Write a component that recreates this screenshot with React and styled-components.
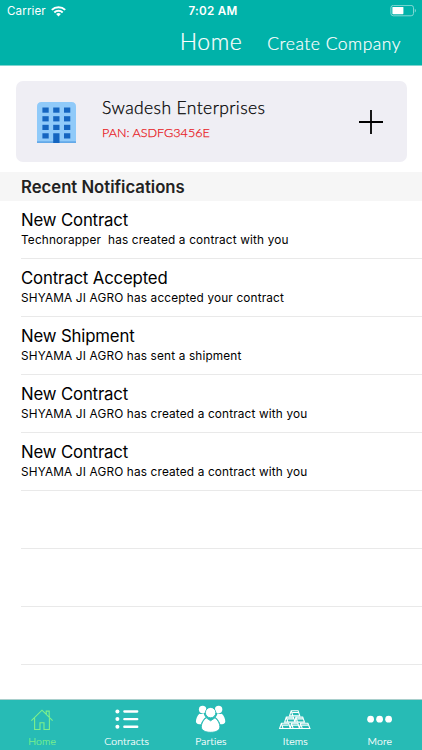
import React from "react";
import styled, { createGlobalStyle } from "styled-components";

const GlobalStyle = createGlobalStyle`
  * {
    box-sizing: border-box;
  }

  body {
    margin: 0;
    background: #fff;
  }
`;

const system = `Inter, "Liberation Sans", sans-serif`;
const rounded = `Lato, "Open Sans", sans-serif`;

const Screen = styled.div`
  width: 422px;
  height: 750px;
  display: flex;
  flex-direction: column;
  overflow: hidden;
  background: #fff;
  font-family: ${system};
`;

// Header
const Header = styled.header`
  height: 66px;
  flex-shrink: 0;
  background: #00b2a9;
  border-bottom: 1px solid #7fd4cf;
  color: #fff;
`;

const StatusBar = styled.div`
  height: 22px;
  display: grid;
  grid-template-columns: 1fr auto 1fr;
  align-items: center;
  padding: 0 5px 0 7px;
  font-size: 11.6px;
  line-height: 22px;
`;

const Carrier = styled.div`
  display: flex;
  align-items: center;
  gap: 5px;
  letter-spacing: 0.12px;
`;

const Clock = styled.div`
  margin-left: 2px;
  font-weight: 600;
  font-size: 11.7px;
  letter-spacing: 0.25px;
`;

const BatteryIcon = styled.svg`
  justify-self: end;
`;

const NavBar = styled.div`
  height: 43px;
  display: grid;
  grid-template-columns: 1fr auto 1fr;
  align-items: baseline;
  padding: 0 21px;
  font-family: ${rounded};
  font-weight: 300;
  line-height: 40px;
  -webkit-text-stroke: 0.2px;
`;

const NavTitle = styled.h1`
  grid-column: 2;
  margin: 0;
  font-size: 23px;
  font-weight: 300;
  line-height: 38px;
  letter-spacing: 0.5px;
`;

const NavAction = styled.button`
  justify-self: end;
  padding: 0;
  border: none;
  background: none;
  color: #fff;
  font-family: inherit;
  font-size: 17.5px;
  font-weight: 300;
  line-height: 38px;
  white-space: nowrap;
  letter-spacing: 0.5px;
`;

// Company card
const CompanyCard = styled.section`
  height: 81px;
  flex-shrink: 0;
  margin: 15px 15.5px 10px;
  padding: 0 24px 0 21px;
  display: flex;
  align-items: center;
  border-radius: 7px;
  background: #efeef4;
  font-family: ${rounded};
`;

const CompanyInfo = styled.div`
  flex: 1;
  margin: -2px 0 1px 26.5px;
`;

const CompanyName = styled.div`
  color: #000;
  font-size: 17.5px;
  font-weight: 300;
  line-height: 25px;
  letter-spacing: 0.4px;
  -webkit-text-stroke: 0.25px;
`;

const CompanyPan = styled.div`
  color: #e8181d;
  font-size: 12.6px;
  font-weight: 300;
  line-height: 26px;
  letter-spacing: 0;
  -webkit-text-stroke: 0.25px;
`;

// Notifications
const SectionTitle = styled.h2`
  height: 29px;
  flex-shrink: 0;
  margin: 0;
  padding-left: 21px;
  background: #f6f6f6;
  color: #222;
  font-size: 16.7px;
  font-weight: 600;
  line-height: 30px;
`;

const List = styled.ul`
  flex: 1;
  min-height: 0;
  overflow: hidden;
  margin: 0;
  padding: 0 0 0 21px;
  list-style: none;
`;

const Row = styled.li`
  height: 58px;
  padding-top: 7px;
  border-bottom: 1px solid #e9e9e9;
  color: #000;
`;

const RowTitle = styled.div`
  font-size: 16.8px;
  line-height: 24px;
  letter-spacing: -0.17px;
`;

const RowText = styled.div`
  font-size: 11.8px;
  line-height: 17px;
  white-space: pre;
  letter-spacing: 0.16px;
`;

// Tab bar
const TabBar = styled.nav`
  height: 51px;
  flex-shrink: 0;
  display: grid;
  grid-template-columns: repeat(5, 1fr);
  border-top: 1px solid #a9cfcc;
  background: #27bbb5;
`;

const Tab = styled.div`
  display: flex;
  flex-direction: column;
  align-items: center;
  color: ${({ $active }) => ($active ? "#7df08b" : "#fff")};
`;

const TabIcon = styled.svg`
  display: block;
  width: 36px;
  height: 34px;
`;

const TabLabel = styled.span`
  font-family: ${rounded};
  font-size: 10.4px;
  font-weight: 300;
  line-height: 14px;
  letter-spacing: 0.15px;
  -webkit-text-stroke: 0.2px;
`;

const Wifi = () => (
  <svg width="15" height="11" viewBox="0 0 15 11" fill="none" stroke="#fff" strokeWidth="2">
    <path d="M0.8 3.9a9.6 9.6 0 0 1 13.4 0" />
    <path d="M3.3 6.5a6 6 0 0 1 8.4 0" />
    <path d="M7.5 10.4 5.1 8.1a3.5 3.5 0 0 1 4.8 0z" fill="#fff" stroke="none" />
  </svg>
);

const Battery = () => (
  <BatteryIcon width="27" height="12" viewBox="0 0 27 12" fill="none">
    <rect x="0.9" y="0.4" width="22.6" height="10.4" rx="2.4" stroke="#80d8d4" />
    <rect x="2.4" y="2" width="11" height="7.2" rx="0.6" fill="#fff" />
    <path d="M24.8 3.7c1.5.6 1.5 3.1 0 3.7z" fill="#80d8d4" />
  </BatteryIcon>
);

const BuildingIcon = styled.svg`
  flex-shrink: 0;
  margin-top: 2px;
`;

const Building = () => (
  <BuildingIcon width="39" height="41" viewBox="0 0 39 41">
    <path d="M0 41V4.5Q0 0 4.5 0h30Q39 0 39 4.5V41z" fill="#90caf9" />
    <path d="M0 39.3h39V41H0z" fill="#64a9e8" />
    {[5.5, 14.2, 22.8].map((y) =>
      [5.4, 16.2, 27].map((x) => (
        <rect key={`${x}-${y}`} x={x} y={y} width="6.3" height="5.2" fill="#1565c0" />
      ))
    )}
    <path d="M5.4 31.2h6.3v5.2H5.4zM27 31.2h6.3v5.2H27zM16.2 31.2h6.3V41h-6.3z" fill="#1565c0" />
  </BuildingIcon>
);

const Plus = () => (
  <svg width="24" height="24" viewBox="0 0 24 24" stroke="#000" strokeWidth="1.8">
    <path d="M12 0v24M0 12h24" />
  </svg>
);

const HomeIcon = () => (
  <TabIcon viewBox="0 0 36 34" fill="none" stroke="currentColor" strokeWidth="1.1">
    <path d="M7.4 20.7 18 10.2l10.6 10.5M10.6 18.3v11.2h5.4v-6.8h4v6.8h5.4V18.3M22.2 14v-2.9h3v6" />
  </TabIcon>
);

const ContractsIcon = () => (
  <TabIcon viewBox="0 0 36 34" fill="currentColor">
    {[11.5, 19.1, 26.8].map((y) => (
      <g key={y}>
        <circle cx="8.4" cy={y} r="2" />
        <rect x="14.2" y={y - 1.2} width="15.2" height="2.4" rx="1.1" />
      </g>
    ))}
  </TabIcon>
);

const PartiesIcon = () => (
  <TabIcon viewBox="0 0 36 34" fill="currentColor">
    <circle cx="9.6" cy="9.5" r="3.7" />
    <circle cx="25.6" cy="9.5" r="3.7" />
    <path d="M6.4 13.7c-2 1.7-3.5 5.2-3.5 7.7 0 2 2 2.8 5 2.9 1-3.2 2.6-5.4 4.8-7-1.2-1.2-1.9-2.5-1.9-4-1.7.8-3 .9-4.4.4z" />
    <path d="M28.8 13.7c2 1.7 3.5 5.2 3.5 7.7 0 2-2 2.8-5 2.9-1-3.2-2.6-5.4-4.8-7 1.2-1.2 1.9-2.5 1.9-4 1.7.8 3 .9 4.4.4z" />
    <g stroke="#27bbb5" strokeWidth="0.9">
      <circle cx="17.6" cy="12.6" r="5.2" />
      <path d="M13.2 17.8c-2.8 2-4.9 5.8-4.9 9 0 3.7 4.2 5.5 9.3 5.5s9.3-1.8 9.3-5.5c0-3.2-2.1-7-4.9-9l-4.4 3z" />
    </g>
  </TabIcon>
);

const ItemsIcon = () => (
  <TabIcon viewBox="0 0 36 34" fill="none" stroke="currentColor" strokeWidth="1.1">
    <path d="M14.2 10.7h6.9l1.7 5.2H12.5zM14.2 10.7l1.6 5M15.5 12.5h5.7" />
    <path d="M9.3 17.1h7l1.7 5H7.6zM9.3 17.1l1.6 5M10.5 18.9h5.7M18.9 17.1h6.8l1.8 5h-9.6zM18.9 17.1l1.6 5M20.2 18.9h5.7" />
    <path d="M4.4 23.3h7.3l1.6 5.2H2.6zM4.4 23.3l1.6 5M5.7 25.1h5.7M14.5 23.3h6.4l1.6 5.2h-9.2zM14.5 23.3l1.6 5M15.7 25.1h5.4M23.6 23.3h7.3l2 5.2H22.5zM23.6 23.3l1.6 5M24.9 25.1h6.1" />
  </TabIcon>
);

const MoreIcon = () => (
  <TabIcon viewBox="0 0 36 34" fill="currentColor">
    <circle cx="8.6" cy="19.2" r="3.4" />
    <circle cx="17.6" cy="19.2" r="3.4" />
    <circle cx="26.6" cy="19.2" r="3.4" />
  </TabIcon>
);

const notifications = [
  { title: "New Contract", text: "Technorapper  has created a contract with you" },
  { title: "Contract Accepted", text: "SHYAMA JI AGRO has accepted your contract" },
  { title: "New Shipment", text: "SHYAMA JI AGRO has sent a shipment" },
  { title: "New Contract", text: "SHYAMA JI AGRO has created a contract with you" },
  { title: "New Contract", text: "SHYAMA JI AGRO has created a contract with you" },
];

const tabs = [
  { label: "Home", Icon: HomeIcon },
  { label: "Contracts", Icon: ContractsIcon },
  { label: "Parties", Icon: PartiesIcon },
  { label: "Items", Icon: ItemsIcon },
  { label: "More", Icon: MoreIcon },
];

export default function App() {
  return (
    <>
      <GlobalStyle />
      <Screen>
        <Header>
          <StatusBar>
            <Carrier>
              Carrier <Wifi />
            </Carrier>
            <Clock>7:02 AM</Clock>
            <Battery />
          </StatusBar>
          <NavBar>
            <NavTitle>Home</NavTitle>
            <NavAction>Create Company</NavAction>
          </NavBar>
        </Header>

        <CompanyCard>
          <Building />
          <CompanyInfo>
            <CompanyName>Swadesh Enterprises</CompanyName>
            <CompanyPan>PAN: ASDFG3456E</CompanyPan>
          </CompanyInfo>
          <Plus />
        </CompanyCard>

        <SectionTitle>Recent Notifications</SectionTitle>
        <List>
          {notifications.map((item, index) => (
            <Row key={index}>
              <RowTitle>{item.title}</RowTitle>
              <RowText>{item.text}</RowText>
            </Row>
          ))}
          {/* Empty rows keep their separators */}
          <Row />
          <Row />
          <Row />
        </List>

        <TabBar>
          {tabs.map(({ label, Icon }) => (
            <Tab key={label} $active={label === "Home"}>
              <Icon />
              <TabLabel>{label}</TabLabel>
            </Tab>
          ))}
        </TabBar>
      </Screen>
    </>
  );
}
